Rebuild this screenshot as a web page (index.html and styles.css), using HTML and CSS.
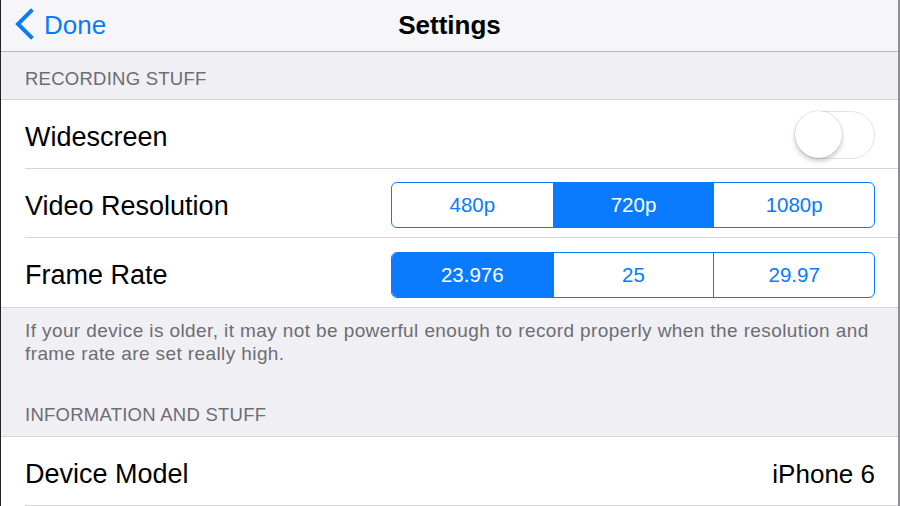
FILE: index.html
```html
<!DOCTYPE html>
<html>
<head>
<meta charset="utf-8">
<link rel="stylesheet" href="styles.css">
</head>
<body>
<div class="screen">
  <header class="navbar">
    <div class="back">
      <svg class="chev" width="22" height="32" viewBox="0 0 22 32"><path d="M18 3 L5 16 L18 29" fill="none" stroke="#0a7aff" stroke-width="4" stroke-linecap="square" stroke-linejoin="miter"/></svg>
      <span>Done</span>
    </div>
    <div class="title">Settings</div>
  </header>

  <div class="section-head first">RECORDING STUFF</div>
  <div class="group">
    <div class="row">
      <span class="label">Widescreen</span>
      <div class="switch"><div class="knob"></div></div>
    </div>
    <div class="row">
      <span class="label">Video Resolution</span>
      <div class="seg">
        <div class="seg-item">480p</div>
        <div class="seg-item on">720p</div>
        <div class="seg-item">1080p</div>
      </div>
    </div>
    <div class="row last">
      <span class="label">Frame Rate</span>
      <div class="seg">
        <div class="seg-item on">23.976</div>
        <div class="seg-item">25</div>
        <div class="seg-item">29.97</div>
      </div>
    </div>
  </div>
  <div class="section-foot">If your device is older, it may not be powerful enough to record properly when the resolution and frame rate are set really high.</div>

  <div class="section-head second">INFORMATION AND STUFF</div>
  <div class="group">
    <div class="row">
      <span class="label">Device Model</span>
      <span class="value">iPhone 6</span>
    </div>
  </div>
</div>
</body>
</html>
```
FILE: styles.css
```css
* { box-sizing: border-box; }
html, body { margin: 0; padding: 0; }
body {
  width: 900px;
  height: 506px;
  overflow: hidden;
  font-family: "Liberation Sans", Arial, sans-serif;
  background: #efeff4;
}
.screen {
  width: 900px;
  height: 506px;
  overflow: hidden;
  border-left: 1px solid #222;
  border-right: 2px solid #8e8e93;
  background: #efeff4;
}
.navbar {
  height: 52px;
  background: #f6f6f8;
  border-bottom: 1px solid #b8b8bc;
  display: flex;
  align-items: center;
  justify-content: center;
  position: relative;
}
.back {
  position: absolute;
  left: 12px;
  top: 7px;
  display: flex;
  align-items: center;
  gap: 9px;
  color: #0a7aff;
  font-size: 26px;
}
.back span { margin-top: 3px; }
.title {
  font-size: 26px;
  font-weight: bold;
  color: #000;
  margin-top: -1px;
}
.section-head {
  color: #6d6d72;
  font-size: 18.5px;
  letter-spacing: 0.25px;
  padding: 0 24px;
  display: flex;
  align-items: flex-end;
  border-bottom: 1px solid #d6d6da;
}
.section-head.first { height: 48px; padding-bottom: 9px; }
.section-head.second { height: 72px; padding-bottom: 10px; }
.group {
  background: #fff;
  padding-left: 24px;
}
.row {
  height: 69px;
  display: flex;
  align-items: center;
  justify-content: space-between;
  padding-right: 23px;
  border-bottom: 1px solid #d6d6da;
}
.row.last { border-bottom: none; }
.group:has(.row.last) { border-bottom: 1px solid #d6d6da; }
.label {
  font-size: 27px;
  color: #000;
  padding-top: 6px;
}
.value {
  font-size: 26px;
  color: #000;
  padding-top: 6px;
}
.switch {
  width: 80px;
  height: 48px;
  border-radius: 24px;
  border: 1.5px solid #e3e3e5;
  background: #fff;
  position: relative;
  margin-top: 2px;
}
.knob {
  position: absolute;
  left: -1px;
  top: -1px;
  width: 47px;
  height: 47px;
  border-radius: 50%;
  background: #fff;
  box-shadow: 0 3px 5px rgba(0,0,0,0.22), 0 0 0 0.5px rgba(0,0,0,0.12);
}
.seg {
  width: 484px;
  height: 46px;
  margin-top: 4px;
  border: 1.5px solid #0a7aff;
  border-radius: 6px;
  display: grid;
  grid-template-columns: 1fr 1fr 1fr;
  overflow: hidden;
}
.seg-item {
  display: flex;
  align-items: center;
  justify-content: center;
  color: #0a7aff;
  font-size: 20.5px;
  border-left: 1.5px solid #0a7aff;
}
.seg-item:first-child { border-left: none; }
.seg-item.on {
  background: #0a7aff;
  color: #fff;
}
.section-foot {
  color: #6d6d72;
  font-size: 19px;
  letter-spacing: 0.4px;
  line-height: 23px;
  padding: 11px 20px 0 24px;
}
```
